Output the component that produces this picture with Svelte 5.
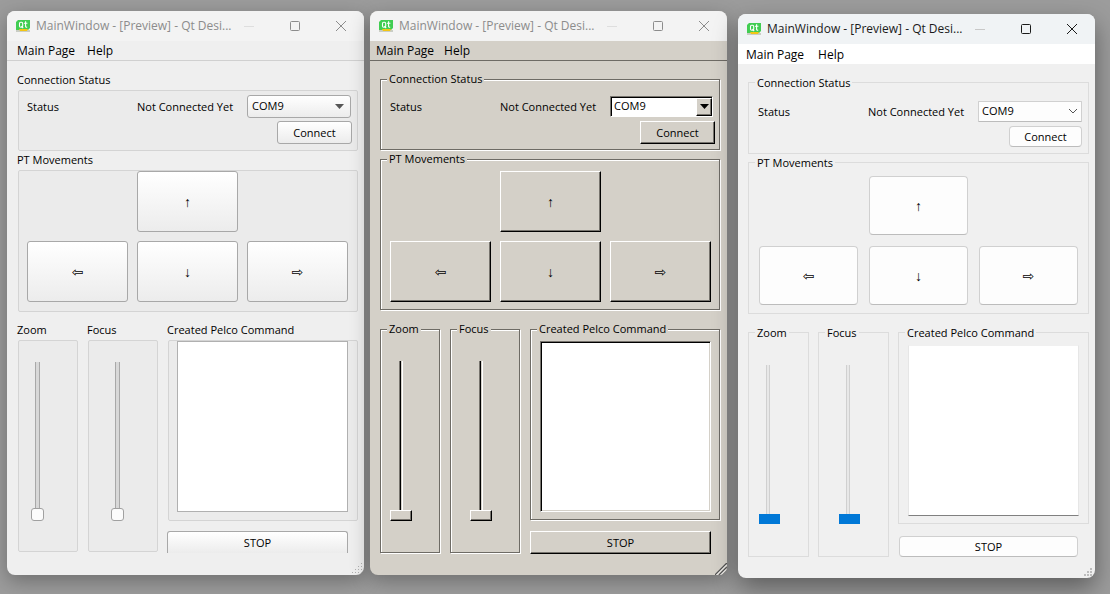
<script>
  const windows = $state([
    { skin: 'fusion', port: 'COM9', zoom: 0, focus: 0, command: '' },
    { skin: 'classic', port: 'COM9', zoom: 0, focus: 0, command: '' },
    { skin: 'modern', port: 'COM9', zoom: 0, focus: 0, command: '' },
  ]);
  const pads = [
    { name: 'up', glyph: '↑' },
    { name: 'left', glyph: '⇦' },
    { name: 'down', glyph: '↓' },
    { name: 'right', glyph: '⇨' },
  ];
</script>

<main class="desktop">
  {#each windows as win (win.skin)}
    <section class="window {win.skin}">
      <header class="titlebar">
        <svg class="logo" width="14" height="12" viewBox="0 0 14 12" aria-hidden="true">
          <path d="M2 0h12v8l-2 2H0V2z" fill="#41cd52" />
          <path d="M0 10h14v2H0z" fill="#c9cdc4" />
          <path d="M3 9h9l-1 2H4z" fill="#f3c614" />
          <g fill="none" stroke="#fff" stroke-width="1.1">
            <rect x="3.5" y="2.2" width="3.2" height="5" rx="1.2" />
            <path d="M5.400 6l1.800 2.200M9.600 1.200v5.200q0 .9 1.600.8M8 3.200h3.400" />
          </g>
        </svg>
        <h1>MainWindow - [Preview] - Qt Desi...</h1>
        <div class="caption">
          <button aria-label="Minimize" class="min">
            <svg width="12" height="12" viewBox="0 0 12 12"><path d="M1 6.500h10" /></svg>
          </button>
          <button aria-label="Maximize">
            <svg width="12" height="12" viewBox="0 0 12 12"><rect x="1.500" y="1.500" width="9" height="9" rx="1" /></svg>
          </button>
          <button aria-label="Close">
            <svg width="12" height="12" viewBox="0 0 12 12"><path d="M1 1l10 10M11 1L1 11" /></svg>
          </button>
        </div>
      </header>

      <nav class="menubar">
        <button>Main Page</button>
        <button>Help</button>
      </nav>

      <div class="content">
        <fieldset class="connection">
          <legend>Connection Status</legend>
          <div class="body">
            <div class="row">
              <span class="key">Status</span>
              <label for="port-{win.skin}">Not Connected Yet</label>
              <div class="combo">
                <select id="port-{win.skin}" bind:value={win.port}>
                  <option>COM9</option>
                </select>
                <span class="drop">
                  {#if win.skin === 'modern'}
                    <svg width="10" height="6" viewBox="0 0 10 6"><path d="M1 1l4 4 4-4" fill="none" stroke="#555" /></svg>
                  {:else}
                    <svg width="9" height="5" viewBox="0 0 9 5"><path d="M0 0h9L4.500 5z" fill="currentColor" /></svg>
                  {/if}
                </span>
              </div>
            </div>
            <button class="push connect">Connect</button>
          </div>
        </fieldset>

        <fieldset class="movement">
          <legend>PT Movements</legend>
          <div class="body">
            {#each pads as pad}
              <button class="push {pad.name}" aria-label={pad.name}>{pad.glyph}</button>
            {/each}
          </div>
        </fieldset>

        <div class="lower">
          <fieldset class="slider">
            <legend>Zoom</legend>
            <div class="body">
              <input type="range" min="0" max="99" aria-label="Zoom" bind:value={win.zoom} />
            </div>
          </fieldset>
          <fieldset class="slider wide">
            <legend>Focus</legend>
            <div class="body">
              <input type="range" min="0" max="99" aria-label="Focus" bind:value={win.focus} />
            </div>
          </fieldset>
          <div class="output">
            <fieldset class="command">
              <legend>Created Pelco Command</legend>
              <div class="body">
                <textarea aria-label="Created Pelco Command" bind:value={win.command}></textarea>
              </div>
            </fieldset>
            <button class="push stop">STOP</button>
          </div>
        </div>
      </div>

      <svg class="grip" width="12" height="12" viewBox="0 0 12 12" aria-hidden="true">
        {#if win.skin === 'classic'}
          <path d="M0 12L12 0M4 12l8-8M8 12l4-4" stroke="#555" stroke-width="1.500" />
          <path d="M1.500 12L12 1.500M5.500 12l6.500-6.500M9.500 12l2.500-2.500" stroke="#fff" />
        {:else if win.skin === 'modern'}
          <path d="M7 2h2v2h-2zM4 5h2v2h-2zM7 5h2v2h-2zM1 8h2v2h-2zM4 8h2v2h-2zM7 8h2v2h-2z" fill="#bdbdbd" />
        {:else}
          <path d="M9 0h1v1h-1zM6 3h1v1h-1zM9 3h1v1h-1zM3 6h1v1h-1zM6 6h1v1h-1zM9 6h1v1h-1zM0 9h1v1h-1zM3 9h1v1h-1zM6 9h1v1h-1zM9 9h1v1h-1z" fill="#b0b0b0" />
        {/if}
      </svg>
    </section>
  {/each}
</main>

<style>
  :global(body) {
    background: #9c9c9c;
  }

  .desktop,
  .desktop * {
    box-sizing: border-box;
  }

  .desktop {
    display: flex;
    align-items: flex-start;
    min-height: 100vh;
    padding: 11px 15px 16px 7px;
    gap: 6px;
    overflow: hidden;
    font: 12px/16px 'Open Sans', 'Noto Sans', sans-serif;
    color: #000;
  }

  .window {
    position: relative;
    flex: 1 1 0;
    min-width: 0;
    border-radius: 8px;
    overflow: hidden;
    background: var(--face);
    box-shadow: 0 6px 20px rgba(0, 0, 0, 0.3);
  }

  .fusion {
    --face: #efefef;
    --edge-x: 7px;
  }

  .classic {
    --face: #d4d0c8;
    --edge-x: 9px;
  }

  .modern {
    --face: #f0f0f0;
    --edge-x: 9px;
    margin: 3px 0 0 5px;
    box-shadow: 0 10px 24px rgba(0, 0, 0, 0.4);
  }

  button,
  select,
  textarea,
  input {
    margin: 0;
    font: inherit;
    color: inherit;
  }

  .titlebar {
    display: flex;
    align-items: center;
    height: 30px;
    padding-left: 9px;
    background: #f3f3f3;
    color: #8c8c8c;
  }

  .modern .titlebar {
    background: #f0f3f5;
    color: #1a1a1a;
  }

  .logo {
    flex: none;
    margin-right: 6px;
  }

  h1 {
    flex: 1;
    min-width: 0;
    margin: 0;
    font: inherit;
    white-space: nowrap;
  }

  .caption {
    display: flex;
  }

  .caption button {
    display: grid;
    place-items: center;
    width: 46px;
    height: 28px;
    padding: 0;
    border: 0;
    background: none;
  }

  .caption svg {
    fill: none;
    stroke: currentColor;
  }

  .caption .min {
    color: #dedede;
  }

  .modern .caption .min {
    color: #c8c8c8;
  }

  .menubar {
    display: flex;
    gap: 12px;
    height: 20px;
    padding-left: 10px;
    border-bottom: 1px solid #d0d0d0;
  }

  .menubar button {
    padding: 0;
    border: 0;
    background: none;
    line-height: 20px;
  }

  .classic .menubar {
    gap: 10px;
    padding-left: 6px;
    border-color: #6e6b65;
  }

  .modern .menubar {
    gap: 14px;
    padding-left: 8px;
    border-color: #fff;
    background: #fff;
  }

  .modern .menubar button {
    line-height: 22px;
  }

  .content {
    display: flex;
    flex-direction: column;
    padding: 10px 6px 24px 10px;
    font-size: 11px;
  }

  fieldset {
    display: block;
    min-width: 0;
    margin: 0;
    padding: 0;
    border: 0;
  }

  legend {
    height: 19px;
    padding: 0;
    line-height: 18px;
  }

  .connection {
    height: 80px;
  }

  .connection .body {
    height: 61px;
    padding: 4px 5px 0 8px;
  }

  .row {
    display: flex;
    align-items: center;
    height: 22px;
  }

  .key,
  .row label {
    width: 110px;
    padding-top: 1px;
    white-space: nowrap;
  }

  .combo {
    position: relative;
    width: 104px;
  }

  select {
    display: block;
    width: 100%;
    height: 23px;
    padding: 0 4px;
    appearance: none;
    border: 1px solid #a8a8a8;
    border-radius: 3px;
    background: linear-gradient(#fff, #ececec);
  }

  .drop {
    position: absolute;
    top: 0;
    right: 7px;
    bottom: 0;
    display: grid;
    place-items: center;
    color: #555;
    pointer-events: none;
  }

  .push {
    display: block;
    padding: 0;
    border: 1px solid #a8a8a8;
    border-radius: 3px;
    background: linear-gradient(#fff, #ececec);
    text-align: center;
  }

  .connect {
    width: 75px;
    height: 23px;
    margin: 4px 0 0 auto;
  }

  .movement {
    height: 160px;
  }

  .movement .body {
    display: grid;
    grid-template: 61px 61px / 1fr 1fr 1fr;
    grid-template-areas: '. up .' 'left down right';
    gap: 9px;
    height: 142px;
    padding: 0 9px 0 8px;
  }

  .movement .push {
    font: 14px/16px 'Liberation Sans', 'DejaVu Sans', sans-serif;
  }

  .up {
    grid-area: up;
  }

  .left {
    grid-area: left;
  }

  .down {
    grid-area: down;
  }

  .right {
    grid-area: right;
  }

  .lower {
    display: grid;
    grid-template-columns: 61px 71px 1fr;
    gap: 9px;
    margin-top: 10px;
    height: 230px;
  }

  .output {
    display: flex;
    flex-direction: column;
    min-width: 0;
  }

  .slider .body {
    height: 212px;
    padding: 20px 0 0 var(--edge-x);
  }

  .slider.wide .body {
    padding-left: calc(var(--edge-x) + 10px);
  }

  input[type='range'] {
    display: block;
    width: 22px;
    height: 160px;
    appearance: none;
    writing-mode: vertical-lr;
    direction: rtl;
    background: linear-gradient(90deg, #a8a8a8 1px, #d8d8d8 1px 4px, #a8a8a8 4px) no-repeat 9px 1px / 5px 152px;
  }

  input[type='range']::-webkit-slider-thumb {
    width: 13px;
    height: 13px;
    appearance: none;
    border: 1px solid #a0a0a0;
    border-radius: 3px;
    background: #fbfbfb;
  }

  .command {
    height: 200px;
  }

  .command .body {
    height: 181px;
    padding: 0 9px 0 8px;
  }

  textarea {
    display: block;
    width: 100%;
    height: 171px;
    padding: 4px;
    border: 1px solid #b0b0b0;
    background: #fff;
    resize: none;
  }

  .stop {
    width: calc(100% - 10px);
    height: 23px;
    margin-top: 10px;
  }

  .grip {
    position: absolute;
    right: 0;
    bottom: 0;
  }

  /* Fusion: titles sit above tinted frames */
  .fusion .body {
    margin-left: 1px;
    border: 1px solid #d4d4d4;
    border-radius: 2px;
    background: #ebebeb;
  }

  .fusion .stop {
    height: 22px;
    border-bottom: 0;
    border-radius: 3px 3px 0 0;
  }

  /* Classic and modern: titles interrupt the frame line */
  .classic legend,
  .modern legend {
    height: 16px;
    margin-left: 6px;
    padding: 0 2px;
    background: var(--face);
  }

  .classic legend {
    line-height: 16px;
  }

  /* Classic: etched frames, raised and sunken edges */
  .classic fieldset {
    margin: 0 1px 1px 0;
    border: 1px solid #6e6b65;
    box-shadow: 1px 1px #fff, inset 1px 1px #fff;
  }

  .classic .connection {
    height: 79px;
  }

  .classic .movement {
    height: 159px;
  }

  .classic .command {
    height: 199px;
  }

  .classic .connection .body {
    padding: 8px 4px 0 9px;
  }

  .classic .movement .body,
  .classic .command .body {
    padding: 4px 8px 0 9px;
  }

  .classic .slider .body,
  .modern .slider .body {
    height: 210px;
    padding-top: 24px;
  }

  .classic .push {
    border: 1px solid;
    border-color: #fff #000 #000 #fff;
    border-radius: 0;
    background: var(--face);
    box-shadow: inset -1px -1px #77746e;
  }

  .classic .combo {
    width: 103px;
  }

  .classic select {
    height: 21px;
    padding-left: 3px;
    border: 1px solid;
    border-color: #77746e #fff #fff #77746e;
    border-radius: 0;
    background: #fff;
    box-shadow: inset 1px 1px #000;
  }

  .classic .drop {
    top: 2px;
    right: 1px;
    bottom: 1px;
    width: 16px;
    border: 1px solid;
    border-color: #fff #000 #000 #fff;
    background: var(--face);
    box-shadow: inset -1px -1px #77746e;
    color: #000;
  }

  .classic textarea {
    border: 1px solid;
    border-color: #77746e #fff #fff #77746e;
    box-shadow: inset 1px 1px #000, inset -1px -1px #d4d0c8;
  }

  .classic input[type='range'] {
    background: linear-gradient(90deg, #77746e 1px, #000 1px 2px, #d4d0c8 2px 3px, #fff 3px) no-repeat 9px 0 / 4px 152px;
  }

  .classic input[type='range']::-webkit-slider-thumb {
    width: 22px;
    height: 11px;
    border: 1px solid;
    border-color: #fff #000 #000 #fff;
    border-radius: 0;
    background: var(--face);
    box-shadow: inset -1px -1px #77746e;
  }

  /* Modern: flat white controls with a blue slider handle */
  .modern fieldset {
    border: 1px solid #dcdcdc;
  }

  .modern .connection .body {
    padding: 10px 6px 0 9px;
  }

  .modern .movement .body,
  .modern .command .body {
    padding: 5px 9px 0;
  }

  .modern .push {
    border-color: #d0d0d0 #d0d0d0 #bcbcbc;
    border-radius: 4px;
    background: #fdfdfd;
  }

  .modern .movement .push {
    margin: 1px;
  }

  .modern .connect {
    width: 73px;
    height: 21px;
  }

  .modern select {
    height: 21px;
    padding-left: 3px;
    border-color: #d0d0d0 #d0d0d0 #bcbcbc;
    border-radius: 1px;
    background: #fdfdfd;
  }

  .modern .drop {
    right: 4px;
  }

  .modern textarea {
    border-color: #f0f0f0 #e6e6e6 #808080;
  }

  .modern .stop {
    width: calc(100% - 12px);
    height: 21px;
    margin: 12px 0 0 1px;
  }

  .modern input[type='range'] {
    background: linear-gradient(90deg, #d0d0d0 1px, #e8e8e8 1px 3px, #d0d0d0 3px) no-repeat 8px 1px / 4px 152px;
  }

  .modern input[type='range']::-webkit-slider-thumb {
    width: 21px;
    height: 10px;
    border: 0;
    border-radius: 0;
    background: #0078d7;
  }
</style>
